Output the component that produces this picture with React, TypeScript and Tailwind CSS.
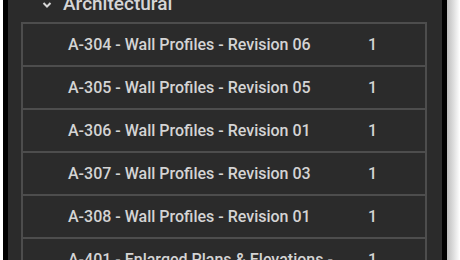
import React from "react";

const rows = [
  { name: "A-304 - Wall Profiles - Revision 06", qty: 1 },
  { name: "A-305 - Wall Profiles - Revision 05", qty: 1 },
  { name: "A-306 - Wall Profiles - Revision 01", qty: 1 },
  { name: "A-307 - Wall Profiles - Revision 03", qty: 1 },
  { name: "A-308 - Wall Profiles - Revision 01", qty: 1 },
  { name: "A-401 - Enlarged Plans & Elevations -", qty: 1 },
];

const App: React.FC = () => {
  return (
    <div className="w-[460px] h-[260px] overflow-hidden bg-white flex pl-[3px]" style={{ fontFamily: "Roboto, 'Liberation Sans', sans-serif" }}>
      <div className="bg-black px-[5px] flex">
        <div className="w-[434px] bg-[#2b2b2b] px-[13px] overflow-hidden">
          <div className="h-[38px] -mt-[16px] flex items-center pl-[21px] text-[#d6d6d6]">
            <svg width="10" height="8" viewBox="0 0 10 8" className="mt-[4px]">
              <path d="M1.5 2 L5 5.5 L8.5 2" fill="none" stroke="#d6d6d6" strokeWidth="2" />
            </svg>
            <span className="ml-[11px] text-[19px] font-medium leading-none">Architectural</span>
          </div>
          <div className="border-2 border-[#4d4d4d] border-b-0 w-[406px]">
            {rows.map((r) => (
              <div key={r.name} className="h-[43px] border-b-2 border-[#4d4d4d] flex items-center text-[16px] font-medium text-[#d4d4d4]">
                <span className="pl-[45px] w-[345px] whitespace-nowrap">{r.name}</span>
                <span>{r.qty}</span>
              </div>
            ))}
          </div>
        </div>
      </div>
      <div className="w-[13px] bg-gradient-to-r from-[#bdbdbd] to-white" />
    </div>
  );
};

export default App;
